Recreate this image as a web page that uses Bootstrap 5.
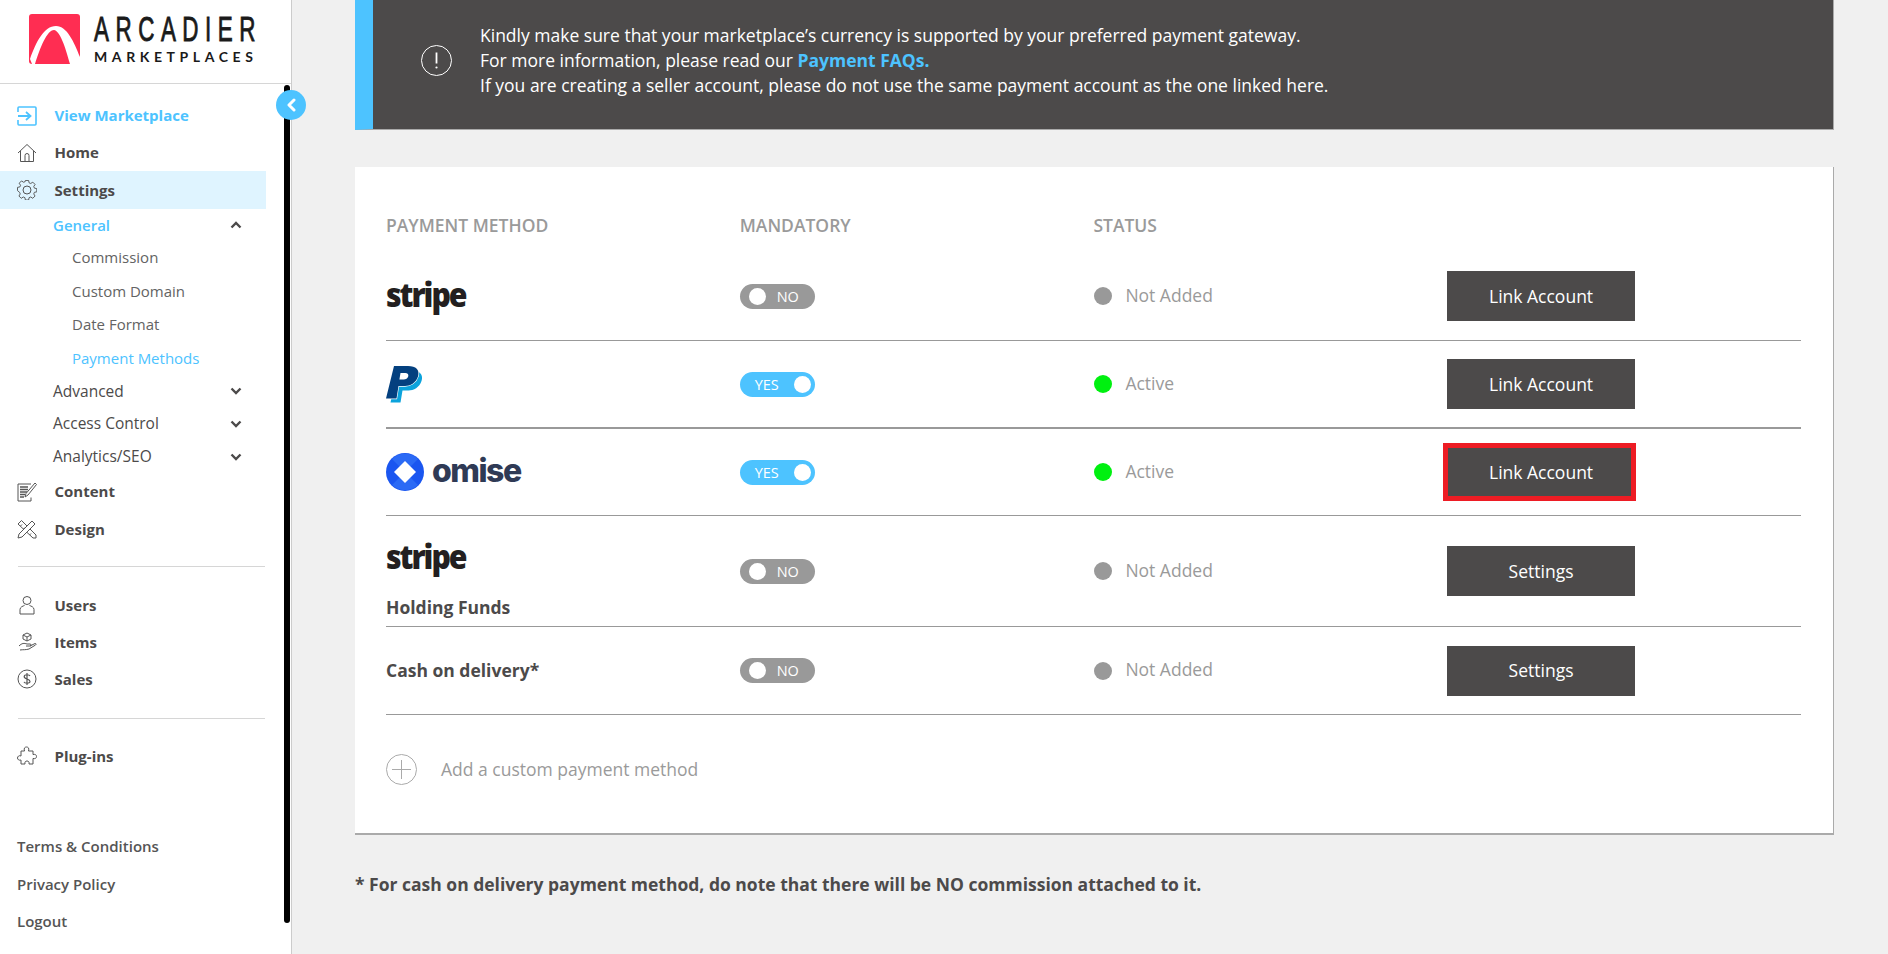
<!DOCTYPE html>
<html lang="en">
<head>
<meta charset="utf-8">
<title>Payment Methods</title>
<link href="https://cdn.jsdelivr.net/npm/bootstrap@5.3.0/dist/css/bootstrap.min.css" rel="stylesheet">
<style>
html,body{height:954px;overflow:hidden}
body{background:#f0f0f0;font-family:"Open Sans",sans-serif;color:#4c4a4a}
.shell{height:954px}
.side{width:292px;flex:none;background:#fff;border-right:1px solid #ccc;position:relative;height:954px}
.brand{height:84px;border-bottom:1px solid #d6d6d6;padding-left:29px;padding-top:14px;gap:14px}
.brand svg{flex:none;display:block}
.brand-word{line-height:1;color:#1a1a1a;width:160px}
.brand-top{font-family:"Liberation Sans",sans-serif;font-weight:400;font-size:35px;letter-spacing:10.2px;line-height:30px;height:30px;white-space:nowrap;transform:scaleX(.64);transform-origin:left center;-webkit-text-stroke:.9px #1a1a1a}
.brand-sub{font-family:Lato,sans-serif;font-weight:700;font-size:14px;letter-spacing:4.6px;line-height:14px;margin-top:6px;white-space:nowrap}
.track{position:absolute;left:284px;top:85px;width:6px;height:838px;background:#000;border-radius:3px}
.toggle-dot{position:absolute;left:276px;top:90px;width:30px;height:30px;border-radius:50%;background:#4dc3ff;z-index:2}
.nav-stack{padding-top:13px;width:266px}
.mrow{height:38px;padding-left:17px;font-weight:700;font-size:15px;color:#4c4a4a;text-decoration:none}
.mrow svg{width:20px;height:20px;flex:none;margin-right:17.5px}
.mrow.tight{height:37px}
.mrow.tighter{height:36.5px}
.mrow.lit{color:#4dc3ff}
.mrow.sel{background:#dff4ff}
.srow{height:32.7px;padding-left:53px;padding-right:24px;font-size:15.5px;color:#4c4a4a;font-weight:400;text-decoration:none}
.srow.lit{color:#4dc3ff}
.srow.head-lit{color:#4dc3ff;font-weight:600;height:31.5px;font-size:15px}
.srow svg{width:12px;height:8px}
.trow{height:33.5px;padding-left:72px;font-size:15px;color:#636363;text-decoration:none;display:flex;align-items:center}
.trow.lit{color:#4dc3ff;height:34px}
.rule-s{height:1px;background:#d6d6d6;margin-left:18px;width:247px}
.rule-one{margin-top:18px;margin-bottom:18.7px}
.rule-two{margin-top:20.3px;margin-bottom:18.7px}
.legal{position:absolute;left:17px;top:828px;font-size:15px;font-weight:600}
.legal a{display:block;height:37.5px;line-height:37.5px;color:#555;text-decoration:none}
.main-col{padding:0 54px 0 63px;min-width:0;flex:1}
.notice{height:130px;background:#4c4a4a;border-left:18px solid #4dc3ff;border-bottom:1px solid #aaa;border-right:1px solid #aaa;color:#fff;font-size:17.5px;line-height:25px;padding-left:48px;padding-bottom:9px;gap:28px}
.notice svg{flex:none}
.notice b{color:#4dc3ff}
.sheet{margin-top:37px;height:668px;background:#fff;border-right:1px solid #aaa;border-bottom:2px solid #aaa;padding:27px 32px 0 31px}
.heads{height:62px;color:#9a9a9a;font-weight:600;font-size:17.5px}
.cellq{width:353.7px;flex:none}
.stat-cell{padding-left:1px}
.pay-row{border-bottom:1px solid #999}
.pay-row.thick{border-bottom-width:2px}
.row-a{height:85px;padding-bottom:4px}
.row-b{height:88px}
.row-c{height:87px}
.row-d{height:111px}
.stripe-word{font-family:"Open Sans",sans-serif;font-weight:800;font-size:34px;letter-spacing:-2.3px;color:#231f20;line-height:1;display:block;transform:scaleX(.89);transform-origin:left center}
.stripe-up{margin-top:-4px}
.stripe-stack{padding-top:18px}
.stack-label{margin-top:21px}
.swt{width:75px;height:25px;border-radius:13px;font-size:14.5px;color:#fff;position:relative;display:block}
.swt i{position:absolute;top:4px;width:17px;height:17px;background:#fff;border-radius:50%}
.swt span{position:absolute;top:0;line-height:25px}
.swt.off{background:#999}.swt.off i{left:9px}.swt.off span{left:37px}
.swt.on{background:#4dc3ff}.swt.on i{left:54px}.swt.on span{left:15px}
.pip{width:18px;height:18px;border-radius:50%;flex:none;margin-right:13px}
.pip.grey{background:#999}.pip.green{background:#00f010}
.stat{color:#9a9a9a;font-size:17.5px;margin-bottom:2px}
.act{width:188px;height:50px;background:#4c4a4a;color:#fff;border:0;border-radius:0;font-size:17.5px;padding:0}
.act.flag{position:relative}
.act.flag::after{content:"";position:absolute;inset:-4px -1px -4px -4px;border:5px solid #ed1c24}
.act:hover{background:#4c4a4a;color:#fff}
.label-b{font-weight:700;font-size:17.5px;color:#4c4a4a}
.omise-word{font-family:Inter,sans-serif;font-weight:800;font-size:32px;letter-spacing:-1.5px;color:#2f3a55;line-height:1;margin-bottom:2px}
.addline{color:#9a9a9a;font-size:17.5px;height:109px;gap:24px}
.addline svg{flex:none}
.foot-note{font-weight:700;font-size:17.5px;margin-top:36px;color:#4c4a4a}
.paypal,.omise-mark{display:block;flex:none}
</style>
</head>
<body>
<div class="shell d-flex">
  <aside class="side">
    <div class="brand d-flex align-items-start">
      <svg width="51" height="50" viewBox="0 0 51 50"><path d="M3 0h45a3 3 0 0 1 3 3v44a3 3 0 0 1-3 3H3a3 3 0 0 1-3-3V3a3 3 0 0 1 3-3z" fill="#ff2d52"/><path d="M1 45C7 28 15 12 27 12c11 0 18 16 24 31v7H41C36 32 31 17 25 16 18 16 11 34 6 50H3z" fill="#fff"/></svg>
      <div class="brand-word"><div class="brand-top">ARCADIER</div><div class="brand-sub">MARKETPLACES</div></div>
    </div>
    <div class="track"></div>
    <div class="toggle-dot d-flex align-items-center justify-content-center"><svg width="12" height="14" viewBox="0 0 12 14"><path d="M9 2L4 7l5 5" fill="none" stroke="#fff" stroke-width="3" stroke-linecap="round" stroke-linejoin="round"/></svg></div>
    <nav class="nav-stack">
      <a class="mrow lit d-flex align-items-center tight" href="#"><svg viewBox="0 0 20 20" fill="none" stroke="#4dc3ff" stroke-width="1.6"><path d="M1 6V2a1 1 0 0 1 1-1h16a1 1 0 0 1 1 1v16a1 1 0 0 1-1 1H2a1 1 0 0 1-1-1v-4"/><path d="M1 10h12M9 6l4.500 4-4.500 4" stroke-width="1.800"/></svg>View Marketplace</a>
      <a class="mrow d-flex align-items-center tight" href="#"><svg viewBox="0 0 20 20" fill="none" stroke="#555" stroke-width="1"><path d="M1 10l9-8.500L19 10M3.500 8v10.500h13V8M8 18.500v-6a2 2 0 0 1 4 0v6"/></svg>Home</a>
      <a class="mrow sel d-flex align-items-center" href="#"><svg viewBox="0 0 20 20" fill="none" stroke="#555" stroke-width="1"><path d="M8.300 1h3.400l.5 2.500 1.700.7 2.200-1.400 2.400 2.400-1.400 2.200.7 1.700 2.500.5v3.400l-2.500.5-.7 1.700 1.400 2.200-2.400 2.400-2.200-1.400-1.700.7-.5 2.500H8.300l-.5-2.500-1.700-.7-2.200 1.400-2.400-2.400 1.400-2.200-.7-1.700L0 11.700V8.300l2.500-.5.7-1.700-1.400-2.200 2.400-2.400 2.200 1.400 1.700-.7z" transform="translate(.5 -.5) scale(.95)"/><circle cx="10" cy="10" r="4"/></svg>Settings</a>
      <a class="srow head-lit d-flex align-items-center justify-content-between" href="#"><span>General</span><svg viewBox="0 0 12 8"><path d="M1.500 6.500L6 2l4.500 4.500" fill="none" stroke="#4c4a4a" stroke-width="2.400"/></svg></a>
      <a class="trow" href="#">Commission</a>
      <a class="trow" href="#">Custom Domain</a>
      <a class="trow" href="#">Date Format</a>
      <a class="trow lit" href="#">Payment Methods</a>
      <a class="srow d-flex align-items-center justify-content-between" href="#"><span>Advanced</span><svg viewBox="0 0 12 8"><path d="M1.500 1.500L6 6l4.500-4.500" fill="none" stroke="#4c4a4a" stroke-width="2.400"/></svg></a>
      <a class="srow d-flex align-items-center justify-content-between" href="#"><span>Access Control</span><svg viewBox="0 0 12 8"><path d="M1.500 1.500L6 6l4.500-4.500" fill="none" stroke="#4c4a4a" stroke-width="2.400"/></svg></a>
      <a class="srow d-flex align-items-center justify-content-between" href="#"><span>Analytics/SEO</span><svg viewBox="0 0 12 8"><path d="M1.500 1.500L6 6l4.500-4.500" fill="none" stroke="#4c4a4a" stroke-width="2.400"/></svg></a>
      <a class="mrow d-flex align-items-center tight" href="#"><svg viewBox="0 0 20 20" fill="none" stroke="#555" stroke-width="1"><path d="M14 15.500v3.500H1V2h13"/><path d="M3 5h8M3 7.500h8M3 10h7M3 12.500h5M3 15h4" stroke-width="1.300"/><path d="M8 15l1-3.500L18 1l1.500 1.500L11 13z" fill="#fff"/></svg>Content</a>
      <a class="mrow d-flex align-items-center" href="#"><svg viewBox="0 0 20 20" fill="none" stroke="#555" stroke-width="1"><path d="M1 5l3.500-3.500L19 16v3h-3z"/><path d="M3.500 7l1.500-1.500M6.500 10L8 8.500M9.500 13l1.500-1.500M12.500 16l1.500-1.500"/><path d="M1 19l1-4L15 2l3 3L5 18z" fill="#fff"/></svg>Design</a>
      <div class="rule-s rule-one"></div>
      <a class="mrow d-flex align-items-center" href="#"><svg viewBox="0 0 20 20" fill="none" stroke="#555" stroke-width="1"><circle cx="10" cy="5.500" r="4"/><path d="M3 19v-4.500c0-2.500 3-3.500 4.500-4M17 19v-4.500c0-2.500-3-3.500-4.500-4M3 19h14"/></svg>Users</a>
      <a class="mrow d-flex align-items-center tight" href="#"><svg viewBox="0 0 20 20" fill="none" stroke="#555" stroke-width="1"><path d="M10 1l4 2v4l-4 2-4-2V3zM6 3l4 2 4-2M10 5v4"/><path d="M2 14c3-3 5-3 8-2h3c1.500 0 1.500 2 0 2H9m4 0l5-2.500c1-.3 1.500 1 .5 1.500L12 17c-3 1-6 .5-9 1"/></svg>Items</a>
      <a class="mrow d-flex align-items-center tighter" href="#"><svg viewBox="0 0 20 20" fill="none" stroke="#555" stroke-width="1"><circle cx="10" cy="10" r="9"/><path d="M13 7c-.5-1.500-5.500-2-5.800.5C7 10.500 13 9.500 13 12.500c0 2.500-5.500 2-6 .3M10 4v12" stroke-width="1.200"/></svg>Sales</a>
      <div class="rule-s rule-two"></div>
      <a class="mrow d-flex align-items-center" href="#"><svg viewBox="0 0 20 20" fill="none" stroke="#555" stroke-width="1"><path d="M4 5h3.500C6.500 2 8 1 9.500 1s3 1 2 4H16v3.500c2.500-.5 3.500.5 3.500 2s-1 2.500-3.500 2V18h-4c.5-2-.5-3-2-3s-2.500 1-2 3H4v-4c-2 .7-3.500-.5-3.500-2S2 9 4 10z"/></svg>Plug-ins</a>
    </nav>
    <div class="legal"><a href="#">Terms &amp; Conditions</a><a href="#">Privacy Policy</a><a href="#">Logout</a></div>
  </aside>
  <main class="main-col">
    <div class="notice d-flex align-items-center">
      <svg width="31" height="31" viewBox="0 0 31 31" fill="none" stroke="#fff"><circle cx="15.500" cy="15.500" r="15"/><path d="M15.500 7.500v11" stroke-width="1.800"/><circle cx="15.500" cy="22.500" r="1.100" fill="#fff" stroke="none"/></svg>
      <div>Kindly make sure that your marketplace’s currency is supported by your preferred payment gateway.<br>For more information, please read our <b>Payment FAQs.</b><br>If you are creating a seller account, please do not use the same payment account as the one linked here.</div>
    </div>
    <section class="sheet">
      <div class="heads d-flex align-items-center"><div class="cellq">PAYMENT METHOD</div><div class="cellq">MANDATORY</div><div class="cellq">STATUS</div></div>
      <div class="pay-row row-a d-flex align-items-center">
        <div class="cellq"><span class="stripe-word stripe-up">stripe</span></div>
        <div class="cellq"><span class="swt off"><i></i><span>NO</span></span></div>
        <div class="cellq stat-cell d-flex align-items-center"><span class="pip grey"></span><span class="stat">Not Added</span></div>
        <button class="btn act">Link Account</button>
      </div>
      <div class="pay-row thick row-b d-flex align-items-center">
        <div class="cellq"><svg class="paypal" width="36" height="37" viewBox="0 0 36 37"><path d="M11.500 4.500H26c8 0 11.500 4.500 9.500 10.500-2 6.500-8 9.500-13 9.500h-6l-2 12H4.500z" fill="#0ca3dc"/><path d="M8 0h14c8 0 12 4 10 10.500C30 17 24 20 19 20h-6.500l-2 12.500H0z" fill="#04407f" stroke="#fff" stroke-width="1.300" paint-order="stroke"/><path d="M14.500 7h4.700c2.500 0 3.700 1.300 3 3.500-.6 2-2.300 3-4.500 3h-4.300z" fill="#fff"/></svg></div>
        <div class="cellq"><span class="swt on"><span>YES</span><i></i></span></div>
        <div class="cellq stat-cell d-flex align-items-center"><span class="pip green"></span><span class="stat">Active</span></div>
        <button class="btn act">Link Account</button>
      </div>
      <div class="pay-row row-c d-flex align-items-center">
        <div class="cellq d-flex align-items-center gap-2"><svg class="omise-mark" width="38" height="38" viewBox="0 0 38 38"><circle cx="19" cy="19" r="19" fill="#1a56f0"/><path d="M6 6a19 19 0 0 1 26 0L19 19zM6 32l13-13 13 13a19 19 0 0 1-26 0z" fill="#2b6af5"/><path d="M19 8l11 11-11 11L8 19z" fill="#fff"/></svg><span class="omise-word">omise</span></div>
        <div class="cellq"><span class="swt on"><span>YES</span><i></i></span></div>
        <div class="cellq stat-cell d-flex align-items-center"><span class="pip green"></span><span class="stat">Active</span></div>
        <button class="btn act flag">Link Account</button>
      </div>
      <div class="pay-row row-d d-flex align-items-center">
        <div class="cellq stripe-stack"><span class="stripe-word">stripe</span><div class="label-b stack-label">Holding Funds</div></div>
        <div class="cellq"><span class="swt off"><i></i><span>NO</span></span></div>
        <div class="cellq stat-cell d-flex align-items-center"><span class="pip grey"></span><span class="stat">Not Added</span></div>
        <button class="btn act">Settings</button>
      </div>
      <div class="pay-row row-b d-flex align-items-center">
        <div class="cellq label-b">Cash on delivery*</div>
        <div class="cellq"><span class="swt off"><i></i><span>NO</span></span></div>
        <div class="cellq stat-cell d-flex align-items-center"><span class="pip grey"></span><span class="stat">Not Added</span></div>
        <button class="btn act">Settings</button>
      </div>
      <div class="addline d-flex align-items-center"><svg width="31" height="31" viewBox="0 0 31 31" fill="none" stroke="#aaa"><circle cx="15.500" cy="15.500" r="15"/><path d="M15.500 6v19M6 15.500h19"/></svg><span>Add a custom payment method</span></div>
    </section>
    <p class="foot-note">* For cash on delivery payment method, do note that there will be NO commission attached to it.</p>
  </main>
</div>
<script src="https://cdn.jsdelivr.net/npm/bootstrap@5.3.0/dist/js/bootstrap.bundle.min.js"></script>
</body>
</html>
